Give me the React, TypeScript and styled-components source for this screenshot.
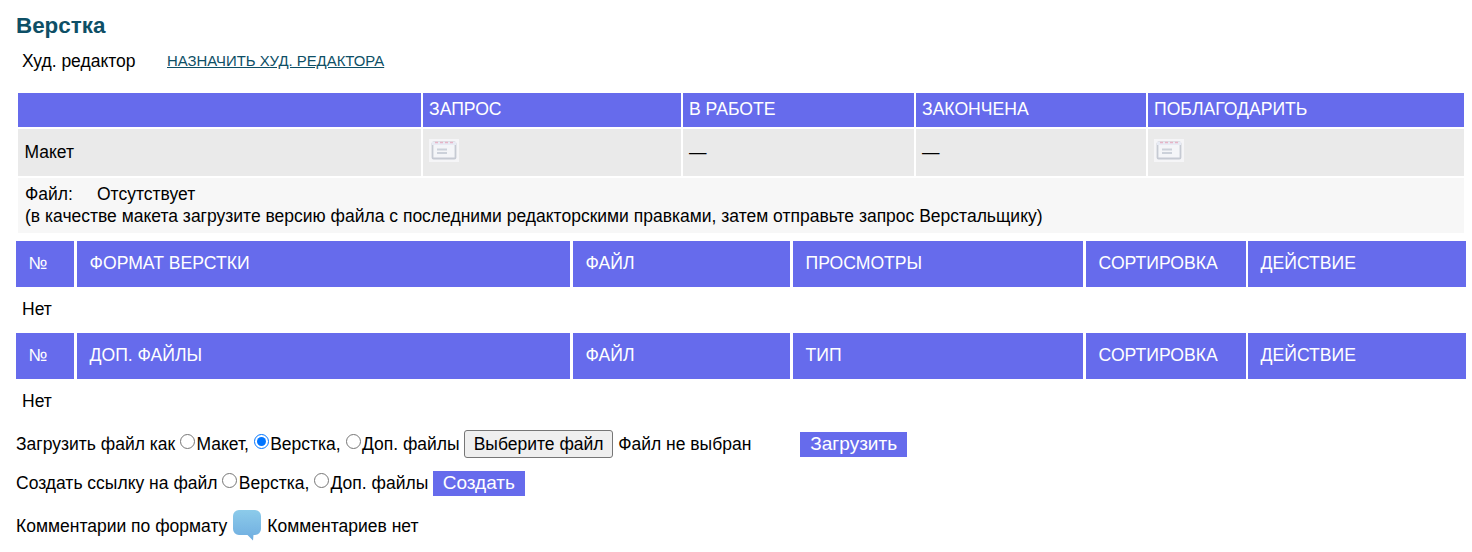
import React from "react";
import styled, { createGlobalStyle } from "styled-components";

const Global = createGlobalStyle`
  html, body { margin: 0; padding: 0; background: #fff; }
  body { font-family: "Liberation Sans", Arial, sans-serif; font-size: 17.5px; color: #000; }
`;

const Page = styled.div`
  width: 1450px;
  padding: 0 6px 0 16px;
`;

const Title = styled.h2`
  margin: 0;
  height: 52px;
  line-height: 51px;
  font-size: 22.4px;
  font-weight: bold;
  color: #0e4f66;
`;

const EditorRow = styled.div`
  display: flex;
  align-items: center;
  height: 18px;
  padding-left: 6px;
  margin-bottom: 21px;
`;

const EditorLabel = styled.span`
  width: 145px;
`;

const EditorLink = styled.a`
  margin-bottom: 1px;
  font-size: 14.9px;
  color: #0e4f66;
  text-decoration: underline;
  text-transform: uppercase;
`;

const WorkflowTable = styled.table`
  width: 1450px;
  table-layout: fixed;
  border-collapse: separate;
  border-spacing: 2px;
  margin-bottom: 6px;
  font-size: 17.5px;
`;

const WorkflowHead = styled.th`
  box-sizing: border-box;
  height: 34px;
  padding: 0 6px 2px;
  background: #666bec;
  color: #fff;
  font-size: 17.6px;
  font-weight: normal;
  text-align: left;
  text-transform: uppercase;
`;

const WorkflowCell = styled.td<{ $first?: boolean }>`
  height: 47px;
  padding: 0 6px 0 ${(p) => (p.$first ? 6.5 : 6)}px;
  background: #eaeaea;
`;

const NoteCell = styled.td`
  height: 55px;
  padding: 0 7px 2px;
  box-sizing: border-box;
  background: #f7f7f7;
  line-height: 22px;
`;

const FileLabel = styled.span`
  display: inline-block;
  width: 72px;
`;

const DocIcon = styled.svg`
  display: block;
  width: 30px;
  height: 23px;
  margin: 0 0 5px;
  filter: blur(0.5px);
`;

const ListTable = styled.table`
  width: 1450px;
  table-layout: fixed;
  border-collapse: separate;
  border-spacing: 0;
  font-size: 17.6px;
`;

const ListHead = styled.th<{ $gap?: number }>`
  height: 46px;
  box-sizing: border-box;
  padding: 0 0 2px 12.6px;
  border-left: ${(p) => p.$gap ?? 0}px solid #fff;
  background: #666bec;
  background-clip: padding-box;
  color: #fff;
  font-weight: normal;
  text-align: left;
  text-transform: uppercase;
`;

const EmptyRow = styled.div`
  height: 46px;
  line-height: 44px;
  padding-left: 6px;
`;

const FormLine = styled.div<{ $height: number }>`
  height: ${(p) => p.$height}px;
  display: flex;
  align-items: center;
  white-space: pre;
`;

const Radio = styled.input.attrs({ type: "radio", readOnly: true })`
  margin: 0 1.4px 5px 0;
  width: 15px;
  height: 15px;
  flex: none;
`;

const FileButton = styled.button`
  box-sizing: border-box;
  width: 149px;
  height: 28px;
  margin: 0 5px 0 4.5px;
  padding: 0;
  border: 1px solid #767676;
  border-radius: 3px;
  background: #efefef;
  color: #000;
  font: 17.5px "Liberation Sans", Arial, sans-serif;
`;

const ActionButton = styled.button<{ $left: number }>`
  height: 25px;
  margin-left: ${(p) => p.$left}px;
  padding: 0 10px;
  border: 0;
  background: #666bec;
  color: #fff;
  font: 19px "Liberation Sans", Arial, sans-serif;
`;

const Bubble = styled.svg`
  width: 30px;
  height: 32px;
  margin: 0 5px 2px;
  flex: none;
  filter: blur(0.4px);
`;

const Doc = () => (
  <DocIcon viewBox="0 0 30 23" aria-hidden="true">
    <rect width="30" height="23" fill="#f5f5f7" />
    <rect x="3.500" y="3.500" width="23" height="16" rx="1" fill="#f4f5f8" stroke="#c6cad3" strokeWidth="1.800" />
    <path d="M3 3h24v3H3z" fill="#e8ebf4" />
    <path d="M6 3.500h3M11 3.500h3M16 3.500h3M21 3.500h3" stroke="#e6b4c6" strokeWidth="1.400" />
    <path d="M8 10.500h10M8 14h10" stroke="#ccd1da" strokeWidth="1.800" />
  </DocIcon>
);

const ListHeader = ({ name, type }: { name: string; type: string }) => (
  <ListTable>
    <colgroup>
      <col width="58" />
      <col width="496" />
      <col width="220" />
      <col width="293" />
      <col width="163" />
      <col width="220" />
    </colgroup>
    <thead>
      <tr>
        <ListHead>№</ListHead>
        <ListHead $gap={3}>{name}</ListHead>
        <ListHead $gap={3}>Файл</ListHead>
        <ListHead $gap={3}>{type}</ListHead>
        <ListHead $gap={3}>Сортировка</ListHead>
        <ListHead $gap={2}>Действие</ListHead>
      </tr>
    </thead>
  </ListTable>
);

export default function App() {
  return (
    <Page>
      <Global />
      <Title>Верстка</Title>
      <EditorRow>
        <EditorLabel>Худ. редактор</EditorLabel>
        <EditorLink href="#">Назначить худ. редактора</EditorLink>
      </EditorRow>

      <WorkflowTable>
        <colgroup>
          <col width="403" />
          <col width="258" />
          <col width="231" />
          <col width="230" />
          <col width="316" />
        </colgroup>
        <thead>
          <tr>
            <WorkflowHead />
            <WorkflowHead>Запрос</WorkflowHead>
            <WorkflowHead>В работе</WorkflowHead>
            <WorkflowHead>Закончена</WorkflowHead>
            <WorkflowHead>Поблагодарить</WorkflowHead>
          </tr>
        </thead>
        <tbody>
          <tr>
            <WorkflowCell $first>Макет</WorkflowCell>
            <WorkflowCell><Doc /></WorkflowCell>
            <WorkflowCell>—</WorkflowCell>
            <WorkflowCell>—</WorkflowCell>
            <WorkflowCell><Doc /></WorkflowCell>
          </tr>
          <tr>
            <NoteCell colSpan={5}>
              <FileLabel>Файл:</FileLabel>Отсутствует
              <br />
              (в качестве макета загрузите версию файла с последними редакторскими правками, затем отправьте запрос Верстальщику)
            </NoteCell>
          </tr>
        </tbody>
      </WorkflowTable>

      <ListHeader name="Формат верстки" type="Просмотры" />
      <EmptyRow>Нет</EmptyRow>
      <ListHeader name="Доп. файлы" type="Тип" />
      <EmptyRow>Нет</EmptyRow>

      <FormLine $height={38}>
        Загрузить файл как <Radio name="a" />Макет, <Radio name="a" defaultChecked />Верстка, <Radio name="a" />Доп. файлы
        <FileButton type="button">Выберите файл</FileButton>Файл не выбран
        <ActionButton type="button" $left={49}>Загрузить</ActionButton>
      </FormLine>
      <FormLine $height={40}>
        Создать ссылку на файл <Radio name="b" />Верстка, <Radio name="b" />Доп. файлы
        <ActionButton type="button" $left={4.5}>Создать</ActionButton>
      </FormLine>
      <FormLine $height={46}>
        Комментарии по формату
        <Bubble viewBox="0 0 30 32" aria-hidden="true">
          <defs>
            <linearGradient id="bubble" x1="0" y1="0" x2="0" y2="1">
              <stop offset="0" stopColor="#8ccbea" />
              <stop offset="1" stopColor="#6fade0" />
            </linearGradient>
          </defs>
          <path d="M7 1h16a6 6 0 0 1 6 6v13a6 6 0 0 1-6 6h-1.500l-.5 5.500-5.500-5.500H7a6 6 0 0 1-6-6V7a6 6 0 0 1 6-6z" fill="url(#bubble)" />
        </Bubble>
        Комментариев нет
      </FormLine>
    </Page>
  );
}
